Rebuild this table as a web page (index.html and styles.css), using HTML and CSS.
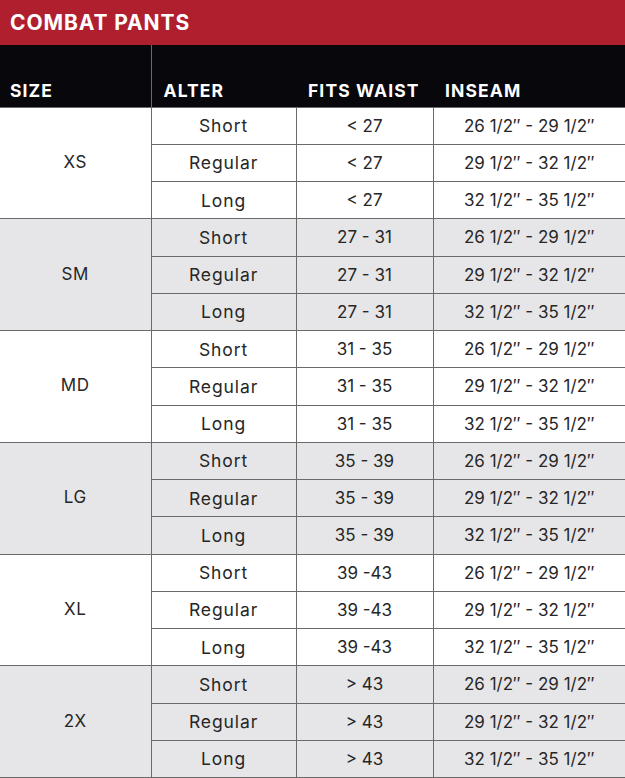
FILE: index.html
```html
<!DOCTYPE html>
<html>
<head>
<meta charset="utf-8">
<link rel="stylesheet" href="styles.css">
</head>
<body>
<div class="chart">
  <div class="title">COMBAT PANTS</div>
  <table class="sizes">
    <colgroup>
      <col class="c-size"><col class="c-alter"><col class="c-waist"><col class="c-inseam">
    </colgroup>
    <thead>
      <tr>
        <th class="h-size">SIZE</th>
        <th>ALTER</th>
        <th>FITS WAIST</th>
        <th>INSEAM</th>
      </tr>
    </thead>
    <tbody class="g-white">
      <tr><td rowspan="3" class="size">XS</td><td class="alt">Short</td><td>&lt; 27</td><td>26 1/2″ - 29 1/2″</td></tr>
      <tr><td class="alt">Regular</td><td>&lt; 27</td><td>29 1/2″ - 32 1/2″</td></tr>
      <tr><td class="alt">Long</td><td>&lt; 27</td><td>32 1/2″ - 35 1/2″</td></tr>
    </tbody>
    <tbody class="g-gray">
      <tr><td rowspan="3" class="size">SM</td><td class="alt">Short</td><td>27 - 31</td><td>26 1/2″ - 29 1/2″</td></tr>
      <tr><td class="alt">Regular</td><td>27 - 31</td><td>29 1/2″ - 32 1/2″</td></tr>
      <tr><td class="alt">Long</td><td>27 - 31</td><td>32 1/2″ - 35 1/2″</td></tr>
    </tbody>
    <tbody class="g-white">
      <tr><td rowspan="3" class="size">MD</td><td class="alt">Short</td><td>31 - 35</td><td>26 1/2″ - 29 1/2″</td></tr>
      <tr><td class="alt">Regular</td><td>31 - 35</td><td>29 1/2″ - 32 1/2″</td></tr>
      <tr><td class="alt">Long</td><td>31 - 35</td><td>32 1/2″ - 35 1/2″</td></tr>
    </tbody>
    <tbody class="g-gray">
      <tr><td rowspan="3" class="size">LG</td><td class="alt">Short</td><td>35 - 39</td><td>26 1/2″ - 29 1/2″</td></tr>
      <tr><td class="alt">Regular</td><td>35 - 39</td><td>29 1/2″ - 32 1/2″</td></tr>
      <tr><td class="alt">Long</td><td>35 - 39</td><td>32 1/2″ - 35 1/2″</td></tr>
    </tbody>
    <tbody class="g-white">
      <tr><td rowspan="3" class="size">XL</td><td class="alt">Short</td><td>39 -43</td><td>26 1/2″ - 29 1/2″</td></tr>
      <tr><td class="alt">Regular</td><td>39 -43</td><td>29 1/2″ - 32 1/2″</td></tr>
      <tr><td class="alt">Long</td><td>39 -43</td><td>32 1/2″ - 35 1/2″</td></tr>
    </tbody>
    <tbody class="g-gray">
      <tr><td rowspan="3" class="size">2X</td><td class="alt">Short</td><td>&gt; 43</td><td>26 1/2″ - 29 1/2″</td></tr>
      <tr><td class="alt">Regular</td><td>&gt; 43</td><td>29 1/2″ - 32 1/2″</td></tr>
      <tr><td class="alt">Long</td><td>&gt; 43</td><td>32 1/2″ - 35 1/2″</td></tr>
    </tbody>
  </table>
</div>
</body>
</html>
```

FILE: styles.css
```css
html, body {
  margin: 0;
  padding: 0;
  background: #ffffff;
}
.chart {
  width: 625px;
  font-family: "Inter", "Liberation Sans", sans-serif;
}
.title {
  height: 45px;
  box-sizing: border-box;
  background: #b01f2e;
  color: #ffffff;
  font-weight: 700;
  font-size: 21px;
  letter-spacing: 0.9px;
  padding: 11px 0 0 10px;
  line-height: 24px;
}
.sizes {
  width: 625px;
  border-collapse: collapse;
  table-layout: fixed;
}
.c-size { width: 151px; }
.c-alter { width: 145px; }
.c-waist { width: 137px; }
.c-inseam { width: 192px; }
.sizes thead th {
  background: #08070c;
  color: #ffffff;
  font-weight: 700;
  font-size: 17.5px;
  letter-spacing: 1.1px;
  text-align: left;
  height: 62px;
  padding: 0 0 6px 12px;
  vertical-align: bottom;
  box-sizing: border-box;
  border-bottom: 1px solid #6a6a6a;
}
.sizes thead th.h-size {
  padding-left: 10px;
  border-right: 1px solid #6a6a6a;
}
.sizes td {
  height: 37.25px;
  padding: 0;
  box-sizing: border-box;
  text-align: center;
  vertical-align: middle;
  font-size: 17px;
  color: #262626;
  border: 1px solid #6a6a6a;
}
.sizes td.alt {
  font-size: 17.5px;
  letter-spacing: 0.9px;
}
.sizes td.size {
  padding-bottom: 2px;
  letter-spacing: 0.6px;
}
.sizes td:first-child { border-left: none; }
.sizes td:last-child { border-right: none; }
.g-white td { background: #ffffff; }
.g-gray td { background: #e6e6e8; }
```
